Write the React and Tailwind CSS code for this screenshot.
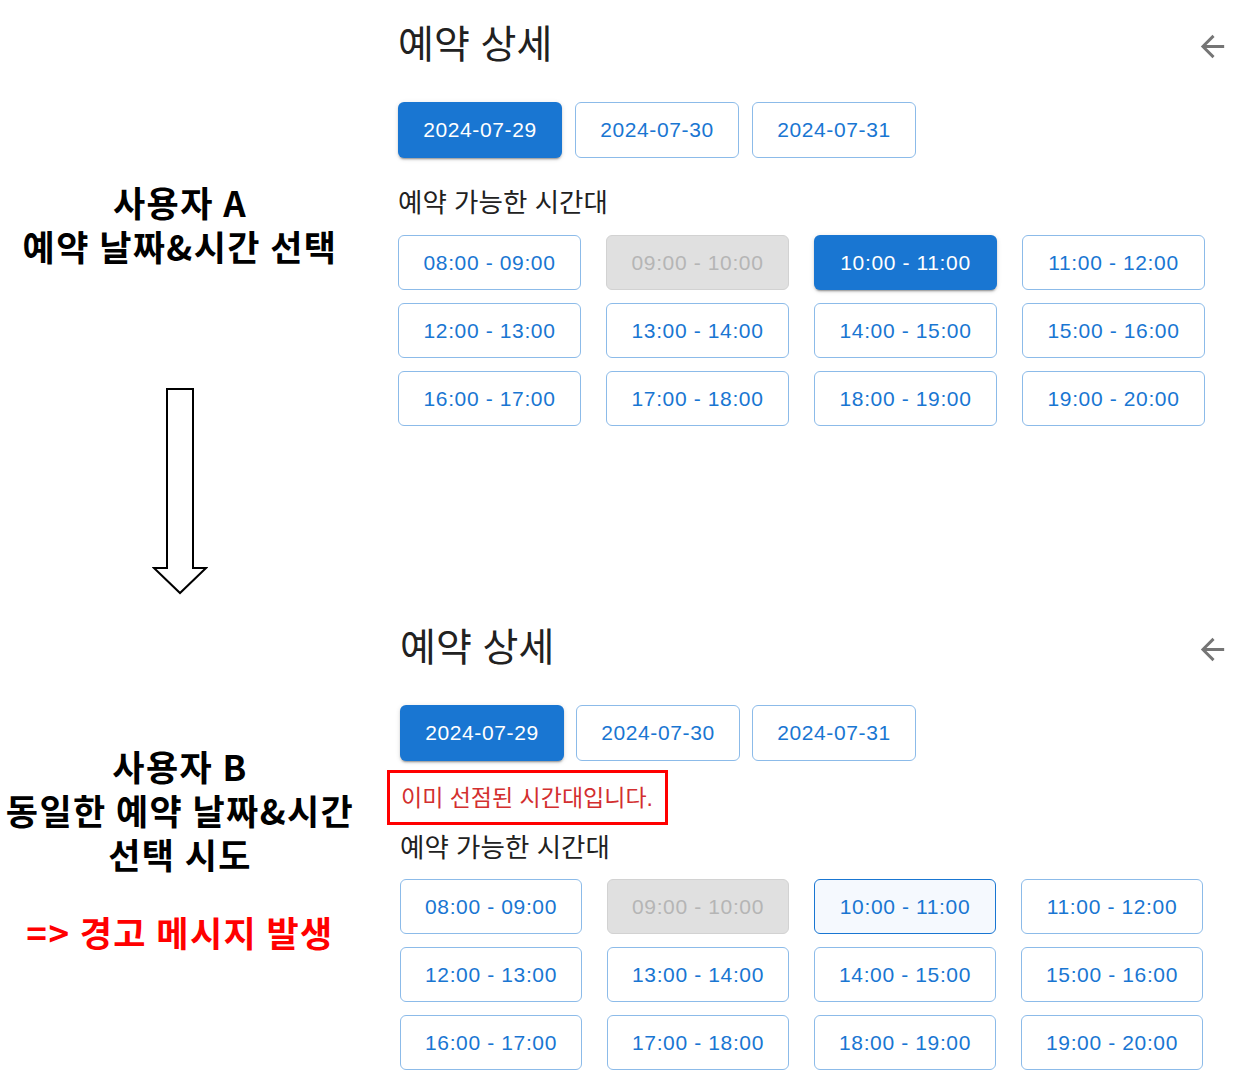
import React from 'react';

const dates = ['2024-07-29', '2024-07-30', '2024-07-31'];
const slots = [
    '08:00 - 09:00', '09:00 - 10:00', '10:00 - 11:00', '11:00 - 12:00',
    '12:00 - 13:00', '13:00 - 14:00', '14:00 - 15:00', '15:00 - 16:00',
    '16:00 - 17:00', '17:00 - 18:00', '18:00 - 19:00', '19:00 - 20:00',
];

const btnFont = { fontFamily: '"Liberation Sans", Arial, "Noto Sans CJK KR", sans-serif' };
const raised = 'shadow-[0_3px_1px_-2px_rgba(0,0,0,0.2),0_2px_2px_0_rgba(0,0,0,0.14),0_1px_5px_0_rgba(0,0,0,0.12)]';

const BackArrow = () => (
    <svg viewBox="0 0 24 24" className="w-[35px] h-[35px] mt-[4px] fill-[#757575]">
        <path d="M20 11H7.83l5.59-5.59L12 4l-8 8 8 8 1.41-1.41L7.83 13H20v-2z" />
    </svg>
);

const Panel = ({ conflict }) => (
    <section className="flex flex-col">
        <div className="flex items-center justify-between h-[48px]">
            <h1 className="text-[39px] leading-[48px] font-normal text-[#212121] pt-[2px]">예약 상세</h1>
            <BackArrow />
        </div>

        <div className={`mt-[34px] flex ${conflict ? 'gap-[12px]' : 'gap-[13px]'}`} style={btnFont}>
            {dates.map((d, i) => (
                <button
                    key={d}
                    className={
                        i === 0
                            ? `w-[164px] h-[56px] rounded-[6px] bg-[#1976d2] text-white text-[21px] tracking-[0.03em] ${raised}`
                            : 'w-[164px] h-[56px] rounded-[6px] border border-[#8cbbe9] bg-white text-[#1976d2] text-[21px] tracking-[0.03em]'
                    }
                >
                    {d}
                </button>
            ))}
        </div>

        {conflict && (
            <div className="mt-[9px] -ml-[13px] w-[281px] h-[55px] border-[3px] border-[#ff0000] flex items-center pl-[11px]">
                <span className="text-[23px] leading-[30px] text-[#d32f2f] whitespace-nowrap">이미 선점된 시간대입니다.</span>
            </div>
        )}

        <p className={`${conflict ? 'mt-[7px]' : 'mt-[29px]'} text-[26.5px] leading-[32px] text-[#212121]`}>
            예약 가능한 시간대
        </p>

        <div
            className={`${conflict ? 'mt-[15px] grid-cols-[182px_182px_182px_182px]' : 'mt-[16px] grid-cols-[183px_183px_183px_183px]'} grid gap-x-[25px] gap-y-[13px]`}
            style={btnFont}
        >
            {slots.map((s, i) => {
                let cls = 'border border-[#8cbbe9] bg-white text-[#1976d2]';
                if (i === 1) cls = 'border border-[#d2d2d2] bg-[#e0e0e0] text-[#b5b5b5]';
                if (i === 2) cls = conflict
                    ? 'border border-[#1976d2] bg-[#f5f9fe] text-[#1976d2]'
                    : `bg-[#1976d2] text-white ${raised}`;
                return (
                    <button key={s} className={`h-[55px] rounded-[6px] text-[21px] tracking-[0.03em] ${cls}`}>
                        {s}
                    </button>
                );
            })}
        </div>
    </section>
);

const Line = ({ children, className = '' }) => (
    <div className={`h-[44px] leading-[44px] ${className}`}>{children}</div>
);

export default function App() {
    return (
        <div
            className="w-[1236px] h-[1086px] bg-white flex overflow-hidden"
            style={{ fontFamily: '"Liberation Sans", "Noto Sans CJK KR", sans-serif' }}
        >
            {/* left notes */}
            <div
                className="w-[360px] shrink-0 flex flex-col items-center text-center font-bold text-[35px] tracking-[0.04em] text-black whitespace-nowrap"
                style={{ fontFamily: '"Noto Sans CJK KR", sans-serif' }}
            >
                <div className="pt-[180px]">
                    <Line>사용자 A</Line>
                    <Line>예약 날짜&amp;시간 선택</Line>
                </div>
                <svg width="56" height="208" viewBox="0 0 56 208" className="mt-[120px] shrink-0">
                    <polygon
                        points="15,1 41,1 41,180 54,180 28,205 2,180 15,180"
                        fill="white"
                        stroke="black"
                        strokeWidth="2"
                    />
                </svg>
                <div className="mt-[148px]">
                    <Line>사용자 B</Line>
                    <Line>동일한 예약 날짜&amp;시간</Line>
                    <Line>선택 시도</Line>
                </div>
                <Line className="mt-[34px] text-[#ff0000]">=&gt; 경고 메시지 발생</Line>
            </div>

            {/* panels */}
            <div className="ml-[38px] w-[832px] flex flex-col">
                <div className="pt-[20px]">
                    <Panel />
                </div>
                <div className="mt-[177px] pt-[20px] pl-[2px]">
                    <Panel conflict />
                </div>
            </div>
        </div>
    );
}
